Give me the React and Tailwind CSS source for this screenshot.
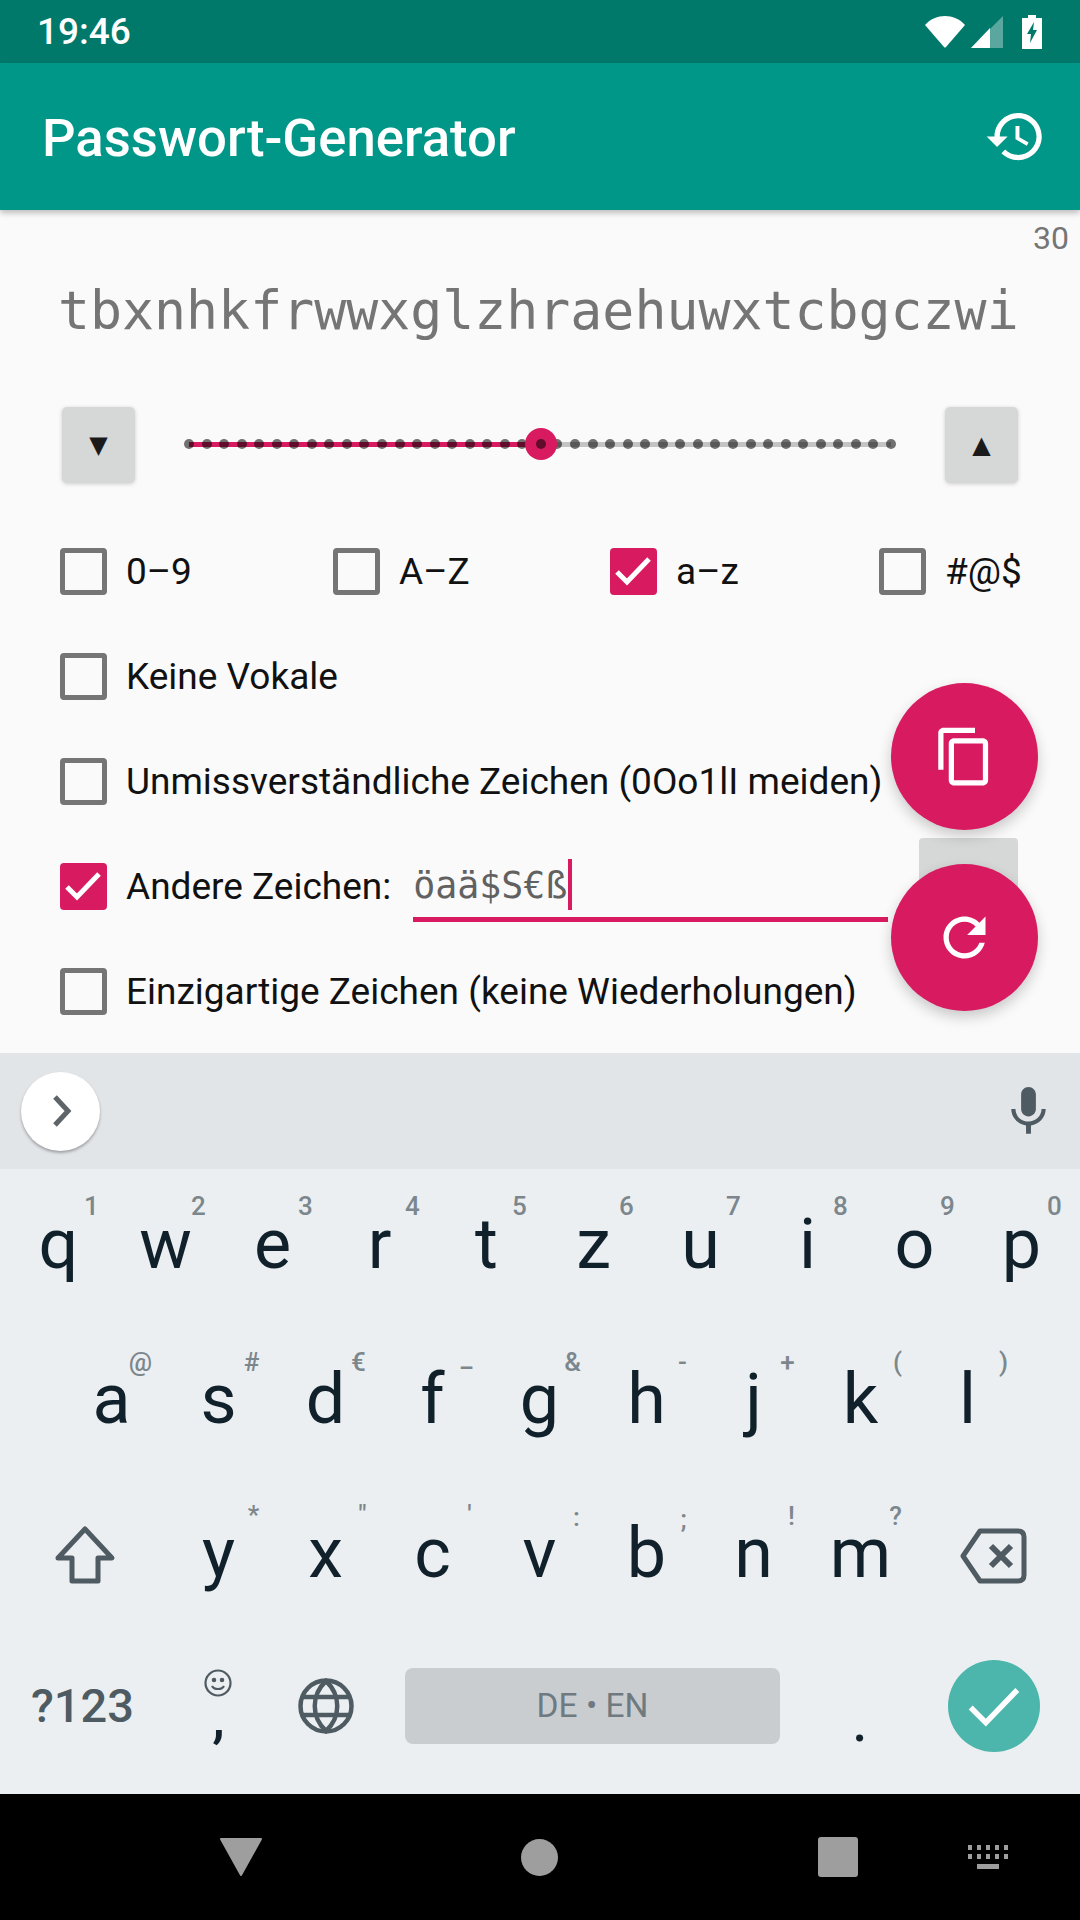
import React from "react";

const Box = ({ checked }) =>
  checked ? (
    <span className="flex h-[47px] w-[47px] shrink-0 items-center justify-center rounded-[4px] bg-[#d81b60]">
      <svg width="47" height="47" viewBox="0 0 47 47"><path d="M7 24L17 34L39 11" fill="none" stroke="#fff" strokeWidth="5" /></svg>
    </span>
  ) : (
    <span className="h-[47px] w-[47px] shrink-0 rounded-[4px] border-[5px] border-[#757575]" />
  );

const Check = ({ label, checked, className = "" }) => (
  <div className={"flex items-center gap-[19px] " + className}>
    <Box checked={checked} />
    <span className="text-[37px] leading-none text-[#111]">{label}</span>
  </div>
);

const Key = ({ k, hint, hintClass = "top-[24px]" }) => (
  <div className="relative flex h-full w-[107px] shrink-0 items-center justify-center text-[70px] leading-none text-[#10212b]">
    {k}
    {hint && (
      <span className={"absolute left-[calc(50%+33px)] -translate-x-1/2 text-[26px] leading-[30px] font-medium text-[#7c878d] " + hintClass}>{hint}</span>
    )}
  </div>
);

const row1 = [["q", "1"], ["w", "2"], ["e", "3"], ["r", "4"], ["t", "5"], ["z", "6"], ["u", "7"], ["i", "8"], ["o", "9"], ["p", "0"]];
const row2 = [
  ["a", "@", "top-[26px] -ml-[4px]"], ["s", "#", "top-[26px]"], ["d", "€", "top-[26px]"], ["f", "_", "top-[22px] ml-[1px] text-[22px]"],
  ["g", "&", "top-[26px]"], ["h", "-", "top-[26px] ml-[3px]"], ["j", "+", "top-[26px] ml-[1px]"], ["k", "(", "top-[26px] ml-[4px]"], ["l", ")", "top-[26px] ml-[3px]"],
];
const row3 = [
  ["y", "*", "top-[24px] ml-[2px]"], ["x", "\"", "top-[23px] ml-[4px]"], ["c", "'", "top-[23px] ml-[4px]"], ["v", ":", "top-[26px] ml-[4px]"], ["b", ";", "top-[28px] ml-[4px]"], ["n", "!", "top-[25px] ml-[5px]"], ["m", "?", "top-[25px] ml-[2px]"],
];

export default function App() {
  return (
    <div className="relative flex h-[1920px] w-[1080px] flex-col overflow-hidden bg-[#fafafa] font-['Roboto',sans-serif]">
      {/* status bar */}
      <div className="flex h-[63px] shrink-0 items-center justify-between bg-[#00796b] pl-[37px] pr-[38px] text-white">
        <span className="text-[37px] leading-none font-medium">19:46</span>
        <div className="flex items-center">
          <svg width="42" height="32" viewBox="0 0 42 32"><path d="M1 9 C 6 3 14 0 21 0 C 28 0 36 3 41 9 L22 31 Q21 32 20 31 Z" fill="#fff" /></svg>
          <svg className="ml-[5px]" width="32" height="32" viewBox="0 0 32 32"><path d="M32 0V32H0Z" fill="#fff" fillOpacity="0.35" /><path d="M19 12V32H0Z" fill="#fff" /></svg>
          <svg className="ml-[19px]" width="20" height="34" viewBox="0 0 20 34"><path d="M6 0h8v3h6v31H0V3h6z" fill="#fff" /><path d="M12 7L5 19h4l-1 9 7-13h-4z" fill="#00796b" /></svg>
        </div>
      </div>
      {/* app bar */}
      <div className="z-10 flex h-[147px] shrink-0 items-center justify-between bg-[#009688] pl-[42px] pr-[33px] shadow-[0_3px_6px_rgba(0,0,0,0.25)]">
        <span className="pt-[3px] text-[52.7px] leading-none font-medium text-white">Passwort-Generator</span>
        <svg width="63" height="63" viewBox="0 0 24 24" fill="#fff">
          <path d="M13 3c-4.97 0-9 4.03-9 9H1l3.89 3.89.07.14L9 12H6c0-3.87 3.13-7 7-7s7 3.13 7 7-3.13 7-7 7c-1.93 0-3.68-.79-4.94-2.06l-1.42 1.42C8.27 19.99 10.51 21 13 21c4.97 0 9-4.03 9-9s-4.03-9-9-9zm-1 5v5l4.28 2.54.72-1.21-3.5-2.08V8H12z" />
        </svg>
      </div>
      {/* content */}
      <div className="relative flex h-[843px] shrink-0 flex-col bg-[#fafafa]">
        <div className="mt-[10px] pr-[11px] text-right text-[32px] leading-[36px] text-[#757575]">30</div>
        <div className="mt-[20px] pl-[58px] font-['DejaVu_Sans_Mono',monospace] text-[53.2px] leading-[70px] whitespace-nowrap text-[#757575]">tbxnhkfrwwxglzhraehuwxtcbgczwi</div>
        <div className="mt-[61px] flex h-[76px] items-center px-[62px]">
          <div className="flex h-[76px] w-[73px] shrink-0 items-center justify-center rounded-[5px] bg-[#d6d7d7] font-['DejaVu_Sans',sans-serif] text-[24px] text-[#1a1a1a] shadow-[0_1px_4px_rgba(0,0,0,0.18)]">▼</div>
          <div className="relative mx-[46px] -mt-[2px] flex h-[40px] flex-1 items-center justify-between px-[3px]">
            <div className="absolute left-[8px] right-[8px] top-[18px] h-[5px] bg-[#c4c4c4]" />
            <div className="absolute left-[8px] top-[18px] h-[5px] w-[352px] bg-[#d81b60]" />
            {Array.from({ length: 41 }).map((_, i) => (
              <span key={i} className="relative h-[10px] w-[10px] rounded-full bg-black/55" />
            ))}
            <div className="absolute left-[344px] top-[4px] flex h-[32px] w-[32px] items-center justify-center rounded-full bg-[#d81b60]">
              <span className="h-[10px] w-[10px] rounded-full bg-black/55" />
            </div>
          </div>
          <div className="flex h-[76px] w-[73px] shrink-0 items-center justify-center rounded-[5px] bg-[#d6d7d7] font-['DejaVu_Sans',sans-serif] text-[24px] text-[#1a1a1a] shadow-[0_1px_4px_rgba(0,0,0,0.18)]">▲</div>
        </div>
        <div className="mt-[65px] flex h-[47px] items-center pl-[60px]">
          <Check label="0–9" className="w-[273px]" />
          <Check label="A–Z" className="w-[277px]" />
          <Check label="a–z" className="w-[269px]" checked />
          <Check label="#@$" />
        </div>
        <div className="mt-[58px] flex h-[47px] items-center pl-[60px]"><Check label="Keine Vokale" /></div>
        <div className="mt-[58px] flex h-[47px] items-center pl-[60px]"><Check label="Unmissverständliche Zeichen (0Oo1lI meiden)" /></div>
        <div className="mt-[58px] flex h-[47px] items-center pl-[60px]">
          <Check label="Andere Zeichen:" checked />
          <div className="relative ml-[22px] flex h-[70px] w-[475px] items-center border-b-[5px] border-[#d81b60] font-['DejaVu_Sans_Mono',monospace] text-[36.6px] text-[#616161]">
            <span className="pt-[4px]">öaä$S€ß</span><span className="ml-[1px] h-[51px] w-[4px] bg-[#d81b60]" />
          </div>
        </div>
        <div className="mt-[58px] flex h-[47px] items-center pl-[60px]"><Check label="Einzigartige Zeichen (keine Wiederholungen)" /></div>

        {/* button behind the FAB */}
        <div className="absolute left-[919px] top-[628px] h-[76px] w-[99px] rounded-[4px] bg-[#d6d7d7]" />
        {/* FABs */}
        <div className="absolute left-[891px] top-[473px] flex h-[147px] w-[147px] items-center justify-center rounded-full bg-[#d81b60] shadow-[0_6px_14px_rgba(0,0,0,0.2)]">
          <svg width="63" height="63" viewBox="0 0 24 24" fill="#fff"><path d="M16 1H4c-1.1 0-2 .9-2 2v14h2V3h12V1zm3 4H8c-1.1 0-2 .9-2 2v14c0 1.1.9 2 2 2h11c1.1 0 2-.9 2-2V7c0-1.1-.9-2-2-2zm0 16H8V7h11v14z" /></svg>
        </div>
        <div className="absolute left-[891px] top-[654px] flex h-[147px] w-[147px] items-center justify-center rounded-full bg-[#d81b60] shadow-[0_6px_14px_rgba(0,0,0,0.2)]">
          <svg width="63" height="63" viewBox="0 0 24 24" fill="#fff"><path d="M17.65 6.35C16.2 4.9 14.21 4 12 4c-4.42 0-7.99 3.58-7.99 8s3.57 8 7.99 8c3.73 0 6.84-2.55 7.73-6h-2.08c-.82 2.33-3.04 4-5.65 4-3.31 0-6-2.69-6-6s2.69-6 6-6c1.66 0 3.14.69 4.22 1.78L13 11h7V4l-2.35 2.35z" /></svg>
        </div>
      </div>
      {/* keyboard suggestion bar */}
      <div className="flex h-[116px] shrink-0 items-center justify-between bg-[#e2e5e8] pl-[21px] pr-[22px] shadow-[0_-4px_10px_rgba(0,0,0,0.08)]">
        <div className="flex h-[79px] w-[79px] items-center justify-center rounded-full bg-white shadow-[0_2px_3px_rgba(0,0,0,0.3)]">
          <svg width="24" height="36" viewBox="0 0 24 36"><path d="M6 4l13 14L6 32" fill="none" stroke="#5f6468" strokeWidth="5" /></svg>
        </div>
        <svg width="59" height="59" viewBox="0 0 24 24" fill="#4f5b62"><path d="M12 14c1.66 0 3-1.34 3-3V5c0-1.66-1.34-3-3-3S9 3.34 9 5v6c0 1.66 1.34 3 3 3zm5.3-3c0 3-2.54 5.1-5.3 5.1S6.7 14 6.7 11H5c0 3.41 2.72 6.23 6 6.72V21h2v-3.28c3.28-.48 6-3.3 6-6.72h-1.7z" /></svg>
      </div>
      {/* keys */}
      <div className="flex h-[625px] shrink-0 flex-col bg-[#eceff1]">
        <div className="-mt-[2px] flex h-[154px] pl-[5px]">
          {row1.map(([k, h]) => <Key key={k} k={k} hint={h} />)}
        </div>
        <div className="flex h-[155px] pl-[58px]">
          {row2.map(([k, h, c]) => <Key key={k} k={k} hint={h} hintClass={c} />)}
        </div>
        <div className="flex h-[153px] items-stretch pl-[4px]">
          <div className="flex w-[161px] shrink-0 items-center justify-center pt-[4px]">
            <svg width="62" height="60" viewBox="0 0 62 60"><path d="M31 4L58 33H44V56H18V33H4Z" fill="none" stroke="#4f5b62" strokeWidth="5" strokeLinejoin="round" /></svg>
          </div>
          {row3.map(([k, h, c]) => <Key key={k} k={k} hint={h} hintClass={c} />)}
          <div className="flex flex-1 items-center justify-center pr-[7px] pt-[6px]">
            <svg width="68" height="56" viewBox="0 0 68 56"><path d="M20 3H58Q64 3 64 9V47Q64 53 58 53H20L3 28Z" fill="none" stroke="#4f5b62" strokeWidth="5" strokeLinejoin="round" /><path d="M31 18L51 38M51 18L31 38" stroke="#4f5b62" strokeWidth="6" /></svg>
          </div>
        </div>
        <div className="flex h-[165px] items-center pb-[12px]">
          <div className="flex w-[165px] justify-center text-[47px] leading-none font-medium text-[#4f5b62]">?123</div>
          <div className="relative flex h-[153px] w-[107px] items-center justify-center text-[#10212b]">
            <svg className="absolute left-[39px] top-[40px]" width="28" height="28" viewBox="0 0 28 28" fill="none" stroke="#4f5b62" strokeWidth="2.2"><circle cx="14" cy="14" r="12.5" /><circle cx="10" cy="11" r="1.2" fill="#4f5b62" /><circle cx="18" cy="11" r="1.2" fill="#4f5b62" /><path d="M8 17c2 4 10 4 12 0" /></svg>
            <span className="mt-[22px] text-[56px] font-medium leading-none">,</span>
          </div>
          <div className="flex w-[107px] justify-center">
            <svg width="56" height="56" viewBox="0 0 56 56" fill="none" stroke="#4f5b62" strokeWidth="4.5"><circle cx="28" cy="28" r="25.5" /><path d="M28 3C13 17 13 39 28 53C43 39 43 17 28 3Z" /><path d="M5 19H51M5 37H51" /></svg>
          </div>
          <div className="ml-[26px] flex h-[76px] w-[375px] items-center justify-center rounded-[8px] bg-[#c9cdd0] text-[33.5px] leading-none text-[#6f7a80]">DE • EN</div>
          <div className="flex w-[160px] justify-center pt-[28px] text-[64px] leading-none text-[#10212b]">.</div>
          <div className="ml-[8px] flex h-[92px] w-[92px] items-center justify-center rounded-full bg-[#4db6ac]">
            <svg width="70" height="70" viewBox="0 0 24 24"><path d="M4 12.5l5.2 5.2L20 6.5" fill="none" stroke="#fff" strokeWidth="1.9" /></svg>
          </div>
        </div>
      </div>
      {/* nav bar */}
      <div className="relative flex flex-1 items-center bg-black">
        <svg className="ml-[219px]" width="44" height="38" viewBox="0 0 44 38"><path d="M2 1H42L22 37Z" fill="#9e9e9e" stroke="#9e9e9e" strokeWidth="2" strokeLinejoin="round" /></svg>
        <div className="ml-[258px] h-[37px] w-[37px] rounded-full bg-[#9e9e9e]" />
        <div className="ml-[260px] h-[40px] w-[40px] rounded-[3px] bg-[#9e9e9e]" />
        <svg className="ml-[110px]" width="40" height="24" viewBox="0 0 40 24" fill="#9e9e9e">
          {[0, 9, 18, 27, 36].map((x) => <rect key={x} x={x} y="0" width="4" height="5" />)}
          {[0, 9, 18, 27, 36].map((x) => <rect key={x + 100} x={x} y="9" width="4" height="5" />)}
          <rect x="9" y="19" width="22" height="5" />
        </svg>
      </div>
    </div>
  );
}
